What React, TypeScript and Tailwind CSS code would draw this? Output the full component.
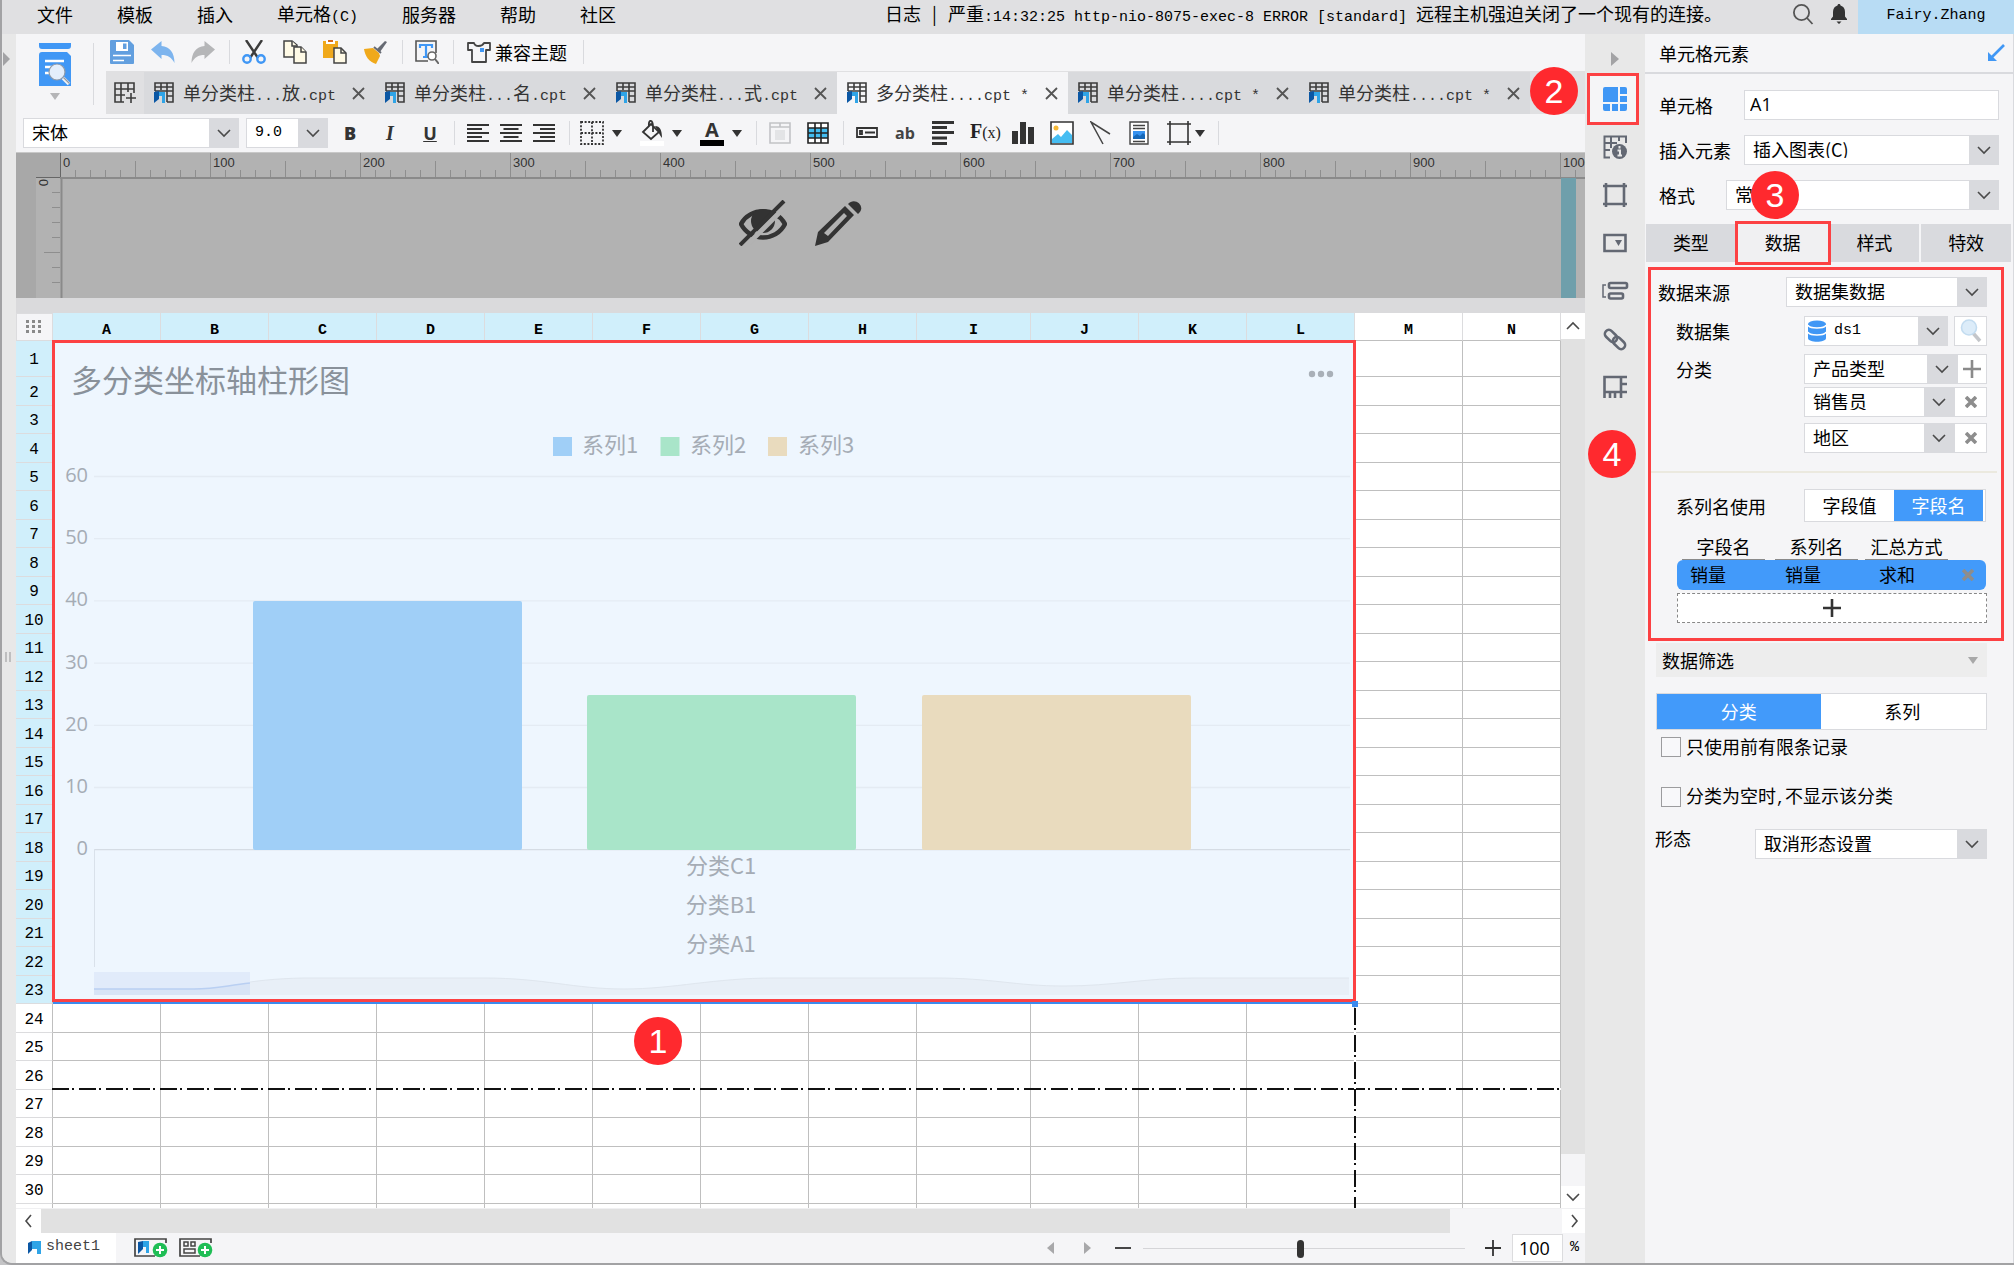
import { useState, type ReactNode } from 'react'

const UI = "font-['Noto_Sans_CJK_SC',sans-serif]"
const MONO = "font-['Liberation_Mono','Noto_Sans_CJK_SC',monospace] text-[15px]"

const MENUS = ['文件', '模板', '插入', '单元格', '服务器', '帮助', '社区']

const TABS = [
  { name: '单分类柱', dots: '...', tail: '放', ext: '.cpt' },
  { name: '单分类柱', dots: '...', tail: '名', ext: '.cpt' },
  { name: '单分类柱', dots: '...', tail: '式', ext: '.cpt' },
  { name: '多分类柱', dots: '....', tail: '', ext: 'cpt *' },
  { name: '单分类柱', dots: '....', tail: '', ext: 'cpt *' },
  { name: '单分类柱', dots: '....', tail: '', ext: 'cpt *' },
]

const COLUMNS = ['A', 'B', 'C', 'D', 'E', 'F', 'G', 'H', 'I', 'J', 'K', 'L', 'M', 'N']
const ROWS = Array.from({ length: 30 }, (_, i) => i + 1)

function Down({ color = '#333' }: { color?: string }) {
  return (
    <svg width="10" height="7" viewBox="0 0 10 7">
      <path d="M0 0h10L5 7z" fill={color} />
    </svg>
  )
}

function Chevron({ dir = 'down' }: { dir?: 'down' | 'up' | 'left' | 'right' }) {
  const d = {
    down: 'M2 5l6 6 6-6',
    up: 'M2 11l6-6 6 6',
    left: 'M10 2L5 8l5 6',
    right: 'M6 2l5 6-5 6',
  }[dir]
  return (
    <svg width="16" height="16" viewBox="0 0 16 16" fill="none" stroke="#4a4a4a" strokeWidth="1.6">
      <path d={d} />
    </svg>
  )
}

function Badge({ n, className }: { n: number; className: string }) {
  return (
    <span
      className={`absolute z-10 flex h-12 w-12 items-center justify-center rounded-full bg-[#ff292e] font-['Liberation_Sans',sans-serif] text-[34px] leading-none text-white ${className}`}
    >
      {n}
    </span>
  )
}

function Select({ label, options, className = '', text = 'text-lg', lead, id }: {
  label: string
  options: string[]
  className?: string
  text?: string
  lead?: ReactNode
  id?: string
}) {
  return (
    <div className={`relative flex h-[30px] items-center border border-[#d9dade] bg-white ${className}`}>
      {lead}
      <select
        id={id}
        aria-label={id ? undefined : label}
        className={`h-full w-full min-w-0 appearance-none bg-transparent pb-[2px] pl-2 leading-none text-black outline-none ${text}`}
      >
        {options.map((o) => (
          <option key={o}>{o}</option>
        ))}
      </select>
      <span className="pointer-events-none absolute inset-y-0 right-0 flex w-[29px] items-center justify-center bg-[#d9dade]">
        <Chevron />
      </span>
    </div>
  )
}

function Tool({ label, children, className = 'w-6' }: { label: string; children: ReactNode; className?: string }) {
  return (
    <button type="button" aria-label={label} className={`flex h-6 shrink-0 items-center justify-center ${className}`}>
      {children}
    </button>
  )
}

function Sep({ className = 'mx-3' }: { className?: string }) {
  return <span className={`h-6 w-px shrink-0 bg-[#d9dade] ${className}`} />
}

function ReportIcon() {
  return (
    <svg width="20" height="22" viewBox="0 0 20 22" className="shrink-0">
      <path d="M1 9V1h18v19h-6M1 5h18M7 1v7M13 1v19M1 9h18M13 14h6" fill="none" stroke="#3c3c3c" strokeWidth="1.6" />
      <path d="M0 10l5-1v8l-5 4z" fill="#0b57a4" />
      <path d="M5 10h6v11H8v-7H5z" fill="#2fa4e7" />
    </svg>
  )
}

function AlignIcon({ kind }: { kind: 'left' | 'center' | 'right' }) {
  return (
    <svg width="22" height="20" viewBox="0 0 22 20" fill="#333">
      {[0, 1, 2, 3, 4].map((i) => {
        const w = i % 2 ? 15 : 22
        const x = kind === 'left' ? 0 : kind === 'right' ? 22 - w : (22 - w) / 2
        return <rect key={i} x={x} y={1 + i * 4} width={w} height="2" />
      })}
    </svg>
  )
}

function MenuBar() {
  return (
    <header className="flex h-[34px] items-center bg-[#e0e0e2] pb-[6px] text-lg leading-none">
      <nav className="flex shrink-0 gap-11 pl-[35px]">
        {MENUS.map((m) => (
          <button type="button" key={m} className="whitespace-nowrap">
            {m}
            {m === '单元格' && <span className={MONO}>(C)</span>}
          </button>
        ))}
      </nav>
      <p className="ml-auto whitespace-nowrap pr-[70px]">
        日志 <span className="px-[7px]">|</span> 严重
        <span className={`${MONO} whitespace-pre`}>:14:32:25 http-nio-8075-exec-8 ERROR [standard] </span>
        远程主机强迫关闭了一个现有的连接。
      </p>
      <button type="button" aria-label="搜索">
        <svg width="22" height="22" viewBox="0 0 22 22" fill="none" stroke="#555" strokeWidth="1.8">
          <circle cx="9.5" cy="9.5" r="7.6" />
          <path d="M15 15l5.500 6" />
        </svg>
      </button>
      <button type="button" aria-label="通知" className="ml-4 mr-[10px]">
        <svg width="18" height="20" viewBox="0 0 18 20" fill="#333">
          <path d="M9 0c1 0 1.500.7 1.500 1.600C13.500 2.400 15 4.800 15 8v4.500l2 2.500v1H1v-1l2-2.500V8c0-3.200 1.500-5.600 4.500-6.400C7.500.7 8 0 9 0zM6.500 17.500h5L9 20z" />
        </svg>
      </button>
      <button type="button" className={`-mb-[6px] h-[34px] w-[156px] shrink-0 bg-[#b8dcf4] pb-1 ${MONO}`}>
        Fairy.Zhang
      </button>
    </header>
  )
}

function MainToolbar() {
  return (
    <div className="flex h-[37px] items-center pb-[2px] pl-4">
      <Tool label="保存">
        <svg width="24" height="24" viewBox="0 0 24 24">
          <path d="M1 0h18l5 5v18a1 1 0 01-1 1H1a1 1 0 01-1-1V1a1 1 0 011-1z" fill="#629fdf" />
          <path d="M6 2h12v9H6z" fill="#fff" />
          <path d="M13 3.500h3.500V9H13z" fill="#629fdf" />
          <path d="M3 15.500h18M3 20.500h11" stroke="#fff" strokeWidth="1.500" />
        </svg>
      </Tool>
      <Tool label="撤销" className="ml-[17px] w-6">
        <svg width="24" height="24" viewBox="0 0 24 24">
          <path d="M0 9.500L10.500 1v5C19 6.500 23.500 13 23.500 23c-3-5.500-6.500-8-13-8v4z" fill="#7db4ee" />
        </svg>
      </Tool>
      <Tool label="重做" className="ml-4 w-6">
        <svg width="24" height="24" viewBox="0 0 24 24">
          <path d="M24 9.500L13.500 1v5C5 6.500.5 13 .5 23c3-5.500 6.500-8 13-8v4z" fill="#b5b6b8" />
        </svg>
      </Tool>
      <Sep className="ml-[14px] mr-3" />
      <Tool label="剪切">
        <svg width="24" height="24" viewBox="0 0 24 24">
          <path d="M4 0l12 18M20 0L8 18" stroke="#3c3c3c" strokeWidth="2.400" />
          <circle cx="5" cy="19" r="3.700" fill="none" stroke="#4097f5" strokeWidth="2.400" />
          <circle cx="19" cy="19" r="3.700" fill="none" stroke="#4097f5" strokeWidth="2.400" />
        </svg>
      </Tool>
      <Tool label="复制" className="ml-[17px] w-6">
        <svg width="24" height="24" viewBox="0 0 24 24" fill="#fffae6" stroke="#444" strokeWidth="1.500">
          <path d="M1 1h8l5 4v12H1z" />
          <path d="M9 1v5h5" />
          <path d="M11 7h7l5 5v11H11z" />
          <path d="M18 7v5h5" />
        </svg>
      </Tool>
      <Tool label="粘贴" className="ml-4 w-6">
        <svg width="24" height="24" viewBox="0 0 24 24">
          <path d="M0 1h15v17H0z" fill="#f0a91b" />
          <path d="M3 0h9v4H3z" fill="#fff" />
          <path d="M5 0h5v2H5z" fill="#d96b1c" />
          <path d="M11 8h7l5 5v10H11z" fill="#fffae6" stroke="#444" strokeWidth="1.500" />
          <path d="M18 8v5h5" fill="none" stroke="#444" strokeWidth="1.500" />
        </svg>
      </Tool>
      <Tool label="格式刷" className="ml-[17px] w-6">
        <svg width="24" height="24" viewBox="0 0 24 24">
          <path d="M13 9l8-8 2 1-7 10z" fill="#666a73" />
          <path d="M0 9l9-1 6 5 1 3-4 8C5 22 1 16 0 9z" fill="#f0a91b" />
          <path d="M10 7l7 6" stroke="#666a73" strokeWidth="2" />
        </svg>
      </Tool>
      <Sep className="ml-[14px] mr-3" />
      <Tool label="预览">
        <svg width="24" height="24" viewBox="0 0 24 24" fill="none">
          <path d="M21 13V1H1v20h12" stroke="#555" strokeWidth="1.600" />
          <path d="M5 8V5h12v3M11 5v12M8 17h5" stroke="#4097f5" strokeWidth="2.200" />
          <circle cx="17" cy="16" r="4" fill="#fff" stroke="#666" strokeWidth="1.600" />
          <path d="M20 19l4 5" stroke="#666" strokeWidth="2" />
        </svg>
      </Tool>
      <Sep className="ml-[14px] mr-[13px]" />
      <button type="button" className="flex items-center gap-1 text-lg leading-none whitespace-nowrap">
        <svg width="24" height="24" viewBox="0 0 24 24">
          <path d="M1 3h6c1 4 8 4 10 0h6v7h-4v12H5V10H1z" fill="none" stroke="#444" strokeWidth="1.800" strokeLinejoin="round" />
          <path d="M13 8h4v4h-4z" fill="#4097f5" />
        </svg>
        兼容主题
      </button>
      <Sep className="mx-4" />
    </div>
  )
}

function FileTabs() {
  const [active, setActive] = useState(3)
  return (
    <div className="ml-3 flex h-[43px] overflow-hidden border-t border-[#e0e0e2] bg-[#e0e0e2]">
      <button type="button" aria-label="新建模板" className="flex w-[38px] shrink-0 items-center justify-center">
        <svg width="22" height="22" viewBox="0 0 22 22" fill="none" stroke="#3c3c3c" strokeWidth="1.600">
          <path d="M20 11V1H1v19h9M1 7h19M1 13h10M7 1v19M14 1v9M12 16h10M17 11v10" />
        </svg>
      </button>
      {TABS.map((t, i) => (
        <div
          key={i}
          className={
            i === active
              ? 'flex w-[231px] shrink-0 items-center bg-[#f5f5f7] pl-[10px]'
              : 'flex w-[231px] shrink-0 items-center bg-[#d9dadd] pl-[10px]'
          }
        >
          <button
            type="button"
            onClick={() => setActive(i)}
            className="flex items-center gap-[9px] text-lg leading-none whitespace-nowrap text-[#333]"
          >
            <ReportIcon />
            <span>
              {t.name}
              <span className={MONO}>{t.dots}</span>
              {t.tail}
              <span className={MONO}>{t.ext}</span>
            </span>
          </button>
          <button type="button" aria-label="关闭" className="ml-4">
            <svg width="13" height="13" viewBox="0 0 13 13" stroke="#555" strokeWidth="1.800">
              <path d="M1 1l11 11M12 1L1 12" />
            </svg>
          </button>
        </div>
      ))}
    </div>
  )
}

function FormatBar() {
  return (
    <div className="flex h-[38px] items-center bg-[#f5f5f7] pl-[7px]">
      <Select label="字体" options={['宋体']} className="w-[216px] shrink-0" />
      <Select label="字号" options={['9.0']} className="ml-[7px] w-[82px] shrink-0" text={`${MONO} pl-1`} />
      <button type="button" className="ml-[14px] w-4 font-['Open_Sans',sans-serif] text-lg leading-none font-extrabold text-[#333]">B</button>
      <button type="button" className="ml-6 w-4 font-['Liberation_Serif',serif] text-xl leading-none font-bold text-[#333] italic">I</button>
      <button type="button" className="ml-6 w-4 font-['Open_Sans',sans-serif] text-lg leading-none font-bold text-[#333] underline">U</button>
      <Sep className="ml-4 mr-3" />
      <div className="flex gap-[11px]">
        <Tool label="左对齐" className="w-[22px]"><AlignIcon kind="left" /></Tool>
        <Tool label="居中" className="w-[22px]"><AlignIcon kind="center" /></Tool>
        <Tool label="右对齐" className="w-[22px]"><AlignIcon kind="right" /></Tool>
      </div>
      <Sep className="ml-[14px] mr-[9px]" />
      <Tool label="边框" className="w-11 gap-2">
        <svg width="24" height="24" viewBox="0 0 24 24" fill="none" stroke="#333" strokeWidth="1.800" strokeDasharray="2 1.600">
          <path d="M1 1h22v22H1zM1 12h22M12 1v22" />
        </svg>
        <Down />
      </Tool>
      <Tool label="填充" className="ml-4 w-11 gap-2">
        <svg width="24" height="26" viewBox="0 0 24 26">
          <path d="M3 12l8-8 8 8-8 7zM9 6c-1-7 4-7 4 1v5" fill="none" stroke="#333" strokeWidth="1.800" />
          <path d="M15 6c5 0 7 4 7 12-2-2-3-5-4-7z" fill="#333" />
          <path d="M0 21h24v5H0z" fill="#fff" />
        </svg>
        <Down />
      </Tool>
      <Tool label="字体颜色" className="ml-4 w-11 gap-2">
        <span className="flex w-6 flex-col items-center border-b-[6px] border-black font-['Open_Sans',sans-serif] text-xl leading-5 font-bold text-[#333]">A</span>
        <Down />
      </Tool>
      <Sep className="ml-[13px] mr-3" />
      <Tool label="合并单元格" className="w-[22px]">
        <svg width="22" height="22" viewBox="0 0 22 22" fill="none" stroke="#c2c3c6" strokeWidth="1.600">
          <path d="M1 1h20v20H1zM1 5h20M11 1v4" />
          <path d="M6 8h10v10H6z" fill="#e3e4e6" stroke="none" />
        </svg>
      </Tool>
      <Tool label="表格" className="ml-4 w-[22px]">
        <svg width="22" height="22" viewBox="0 0 22 22">
          <path d="M1 1h20v20H1z" fill="#fff" />
          <path d="M1 6h20v10H1z" fill="#43bdf0" />
          <path d="M1 1h20v20H1zM1 6h20M1 11h20M1 16h20M8 1v20M14 1v20" fill="none" stroke="#222" strokeWidth="1.600" />
        </svg>
      </Tool>
      <Sep className="ml-[14px] mr-3" />
      <div className="flex items-center gap-4">
        <Tool label="控件" className="w-[22px]">
          <svg width="22" height="12" viewBox="0 0 22 12" fill="none" stroke="#333" strokeWidth="1.800">
            <path d="M1 1h20v9H1zM4 4h2v3H4zM9 5.500h10" />
          </svg>
        </Tool>
        <button type="button" className="w-[22px] font-['Open_Sans',sans-serif] text-base leading-none font-bold text-[#444]">ab</button>
        <Tool label="富文本" className="w-[22px]">
          <svg width="22" height="24" viewBox="0 0 22 24" fill="#333">
            <path d="M0 0h22v3H0zM0 5h15v3H0zM0 10h22v3H0zM0 15.500h15v3H0zM0 21h15v3H0z" />
          </svg>
        </Tool>
        <button type="button" className="w-[26px] whitespace-nowrap font-['Liberation_Serif',serif] text-xl leading-none text-[#222]">
          <b>F</b><span className="text-base">(x)</span>
        </button>
        <Tool label="图表" className="w-[22px]">
          <svg width="22" height="22" viewBox="0 0 22 22" fill="#333">
            <path d="M0 9h6v13H0zM8 0h6v22H8zM16 5h6v17h-6z" />
          </svg>
        </Tool>
        <Tool label="图片">
          <svg width="24" height="24" viewBox="0 0 24 24">
            <path d="M1 1h22v22H1z" fill="#fff" stroke="#333" strokeWidth="1.600" />
            <circle cx="6" cy="7" r="2.500" fill="#f5b836" />
            <path d="M2 18l6-5 3 3 6-7 5 5v8H2z" fill="#45bdf2" />
          </svg>
        </Tool>
        <Tool label="斜线" className="w-[22px]">
          <svg width="22" height="24" viewBox="0 0 22 24" fill="none" stroke="#444" strokeWidth="1.500">
            <path d="M20 13L1 1l12 22" />
          </svg>
        </Tool>
        <Tool label="子报表" className="w-[22px]">
          <svg width="20" height="24" viewBox="0 0 20 24">
            <path d="M1 1h18v22H1z" fill="#fff" stroke="#444" strokeWidth="1.400" />
            <path d="M4 4.500h12M4 7.500h12M4 20.500h12" stroke="#444" strokeWidth="1.400" />
            <path d="M4 10h12v8H4z" fill="#3792ef" />
            <path d="M4 16l4-3 3 2 3-3 2 2v4H4z" fill="#1668b8" />
          </svg>
        </Tool>
        <Tool label="形状" className="w-10 gap-1">
          <svg width="24" height="24" viewBox="0 0 24 24" fill="none" stroke="#333" strokeWidth="1.600">
            <path d="M3 0v24M21 0v24M0 3h24M0 21h24" />
          </svg>
          <Down />
        </Tool>
      </div>
      <Sep className="mx-3" />
    </div>
  )
}

// Page header region: rulers around an empty grey page
function PageHeader() {
  const ticks = Array.from({ length: 102 }, (_, i) => i)
  return (
    <section className="relative h-[146px] overflow-hidden bg-[#b2b2b2]">
      <svg width="100%" height="146" className="block">
        <rect width="20" height="146" fill="#a8a8a8" />
        <rect width="44" height="25" fill="#a8a8a8" />
        <path d="M0 0.500h2400" stroke="#c8c8c8" />
        {ticks.map((i) => {
          const x = 44 + i * 15
          const top = i % 10 === 0 ? 1 : i % 5 === 0 ? 9 : 18
          return <path key={i} d={`M${x + 0.5} ${top}V25`} stroke={i === 0 ? '#666' : '#8e8e8e'} />
        })}
        {Array.from({ length: 11 }, (_, i) => (
          <text key={i} x={47 + i * 150} y="15" fontSize="13" fill="#333" fontFamily="Liberation Sans, sans-serif">
            {i * 100}
          </text>
        ))}
        <path d="M44 26h2400M45.500 25v121" stroke="#8a8a8a" strokeWidth="2" />
        <path d="M20 25.500h24" stroke="#666" />
        {[1, 2, 3, 4, 5, 6, 7].map((i) => (
          <path key={i} d={`M${i === 5 ? 28 : 36} ${25.5 + i * 15}H44`} stroke="#8e8e8e" />
        ))}
        <text transform="translate(28 27) rotate(90)" x="0" y="5" fontSize="13" fill="#333" fontFamily="Liberation Sans, sans-serif">
          0
        </text>
        <rect x="1545" y="26" width="15" height="120" fill="#6f9fab" />
      </svg>
      <div className="absolute inset-x-0 top-12 flex justify-center gap-7">
        <button type="button" aria-label="隐藏">
          <svg width="48" height="46" viewBox="0 0 48 46">
            <path d="M2 24C11 7 37 7 46 24 37 42 11 42 2 24z" fill="none" stroke="#333" strokeWidth="4.500" />
            <circle cx="24" cy="21" r="12" fill="#333" />
            <path d="M6 47L49 4" stroke="#b2b2b2" strokeWidth="5" />
            <path d="M1 45L45 1" stroke="#333" strokeWidth="4" />
          </svg>
        </button>
        <button type="button" aria-label="编辑">
          <svg width="48" height="46" viewBox="0 0 48 46" fill="#333">
            <path d="M0 46l3-14L30 6l9 9-26 27zM9 33l4 3 19-20-3-3z" fillRule="evenodd" />
            <path d="M33 4c7-8 19 3 10 10z" />
          </svg>
        </button>
      </div>
    </section>
  )
}

function Chart() {
  const bars = [
    { x: 253, y: 601, fill: '#a0cff7' },
    { x: 587, y: 695, fill: '#a9e5c9' },
    { x: 922, y: 695, fill: '#e9dbbe' },
  ]
  const family = 'Noto Sans CJK SC, sans-serif'
  return (
    <svg viewBox="54 342 1300 660" className="block h-full w-full bg-[#eef6fe]" fontFamily={family} role="img">
      <text x="71" y="392" fontSize="31" fill="#89919a">多分类坐标轴柱形图</text>
      {[1312, 1321, 1330].map((x) => (
        <circle key={x} cx={x} cy="374" r="3.200" fill="#a9b0b8" />
      ))}
      {['系列1', '系列2', '系列3'].map((s, i) => (
        <g key={s}>
          <rect x={553 + i * 107.5} y="437" width="19" height="19" fill={bars[i].fill} />
          <text x={582 + i * 108} y="453" fontSize="22" fill="#a5acb5">{s}</text>
        </g>
      ))}
      {[60, 50, 40, 30, 20, 10, 0].map((v, i) => (
        <g key={v}>
          <path d={`M94 ${476.5 + i * 62.2}H1350`} stroke={v ? '#e4ebf3' : '#d5dce4'} strokeWidth="1.300" />
          <text x="88" y={482 + i * 62.2} fontSize="20" fill="#a5acb5" textAnchor="end" fontFamily="Open Sans, sans-serif">{v}</text>
        </g>
      ))}
      {bars.map((b) => (
        <rect key={b.x} x={b.x} y={b.y} width="269" height={850 - b.y} rx="2" fill={b.fill} />
      ))}
      <path d="M94.500 849v118" stroke="#d9e1ea" fill="none" />
      {['分类C1', '分类B1', '分类A1'].map((s, i) => (
        <text key={s} x="721" y={874 + i * 39} fontSize="22" fill="#a5acb5" textAnchor="middle">{s}</text>
      ))}
      <path
        d="M94 989h100c30 0 50-10 110-11h180c60 0 90 11 140 11s90-11 150-11h160c60 0 80 8 130 8s80-8 130-8h155v17H94z"
        fill="#e8eff7"
      />
      <path d="M194 989c30 0 50-10 110-11h180c60 0 90 11 140 11s90-11 150-11h160c60 0 80 8 130 8s80-8 130-8h155" fill="none" stroke="#dfe6ee" />
      <rect x="94" y="972" width="156" height="23" fill="#e1ebfa" />
      <path d="M94 989h100c22 0 30-3 56-6v12H94z" fill="#d8e4f6" />
      <path d="M94 989h100c22 0 30-3 56-6" fill="none" stroke="#b9cff2" strokeWidth="1.500" />
    </svg>
  )
}

function Sheet() {
  const cell = 'border-r border-b border-[#bfbfbf] p-0'
  return (
    <section className="flex bg-white">
      <div className="relative min-w-0 flex-1 overflow-hidden">
        <table className="w-full table-fixed border-separate border-spacing-0 font-['Liberation_Mono',monospace] text-base leading-none">
          <colgroup>
            <col className="w-[37px]" />
            {COLUMNS.map((c) => (
              <col key={c} className={c === 'I' ? 'w-[114px]' : c === 'N' ? '' : 'w-[108px]'} />
            ))}
          </colgroup>
          <thead>
            <tr className="h-7">
              <td className="border border-[#dcdcde] bg-[#f5f5f7] p-0">
                <svg width="18" height="14" viewBox="0 0 18 14" className="mx-auto" fill="#8a8a8a">
                  {[0, 6, 12].map((x) => [0, 5, 10].map((y) => <rect key={`${x}-${y}`} x={x} y={y} width="3" height="3" />))}
                </svg>
              </td>
              {COLUMNS.map((c, i) => (
                <th
                  key={c}
                  className={`border-r border-b border-b-[#bfbfbf] border-r-[#dcdcde] p-0 pt-2 text-[15px] font-bold ${i < 12 ? 'bg-[#d0effb]' : 'bg-white'}`}
                >
                  {c}
                </th>
              ))}
            </tr>
          </thead>
          <tbody>
            {ROWS.map((r) => (
              <tr key={r} className={r === 1 ? 'h-9' : 'h-7 even:h-[29px]'}>
                <th
                  className={`border-r border-b border-b-[#dcdcde] border-r-[#bfbfbf] p-0 pt-[3px] font-normal ${r < 24 ? 'bg-[#d0effb]' : 'bg-white'}`}
                >
                  {r}
                </th>
                {r === 1 && (
                  <td colSpan={12} rowSpan={23} className="relative p-0">
                    <div className="absolute inset-0 border border-b-2 border-[#3c8bee]">
                      <Chart />
                    </div>
                    <span className="absolute -inset-px bottom-[2px] border-[3px] border-[#fc4143]" />
                    <span className="absolute -right-[3px] -bottom-[3px] h-[6px] w-[6px] bg-[#3c8bee]" />
                  </td>
                )}
                {COLUMNS.slice(r < 24 ? 12 : 0).map((c) => (
                  <td key={c} className={cell} />
                ))}
              </tr>
            ))}
            <tr className="h-1">
              <th className="border-r border-[#bfbfbf] p-0" />
              {COLUMNS.map((c) => (
                <td key={c} className="border-r border-[#bfbfbf] p-0" />
              ))}
            </tr>
          </tbody>
        </table>
        {/* page break guides */}
        <span className="absolute right-0 bottom-[118px] left-9 h-[2px] bg-[repeating-linear-gradient(90deg,#111_0_17px,#fff_17px_20px,#111_20px_22px,#fff_22px_27px)]" />
        <span className="absolute bottom-0 left-[1338px] h-[200px] w-[2px] bg-[repeating-linear-gradient(180deg,#111_0_17px,#fff_17px_20px,#111_20px_22px,#fff_22px_27px)]" />
        <Badge n={1} className="bottom-[143px] left-[618px]" />
      </div>
      <div className="flex w-6 shrink-0 flex-col bg-[#f5f5f7]">
        <button type="button" aria-label="向上滚动" className="flex h-[26px] items-center justify-center bg-white"><Chevron dir="up" /></button>
        <div className="flex-1 bg-[#e1e1e1]" />
        <div className="h-8" />
        <button type="button" aria-label="向下滚动" className="flex h-[22px] items-center justify-center bg-white"><Chevron /></button>
      </div>
    </section>
  )
}

function AddSheetIcon({ report }: { report?: boolean }) {
  return (
    <svg width="34" height="20" viewBox="0 0 34 20">
      <path d="M32 5V1H1v17h20" fill="none" stroke="#444" strokeWidth="1.700" />
      {report ? (
        <>
          <path d="M4 4l5-1v8l-5 5z" fill="#0b57a4" />
          <path d="M9 3h6v12h-3V9H9z" fill="#2fa4e7" />
        </>
      ) : (
        <path d="M5 4h4v4H5zM12 4h4v4h-4zM5 11h11v4H5z" fill="none" stroke="#444" strokeWidth="1.500" />
      )}
      <circle cx="26" cy="12" r="7.300" fill="#1fbe55" />
      <path d="M22 12h8M26 8v8" stroke="#fff" strokeWidth="2" />
    </svg>
  )
}

function BottomBar() {
  return (
    <footer className="bg-[#f5f5f7]">
      <div className="flex h-[25px] border-t border-[#f0f0f2]">
        <button type="button" aria-label="向左滚动" className="flex w-[25px] items-center justify-center bg-white"><Chevron dir="left" /></button>
        <div className="flex-1 bg-[#e1e1e1]" />
        <div className="w-28" />
        <button type="button" aria-label="向右滚动" className="flex w-[23px] items-center justify-center bg-white"><Chevron dir="right" /></button>
      </div>
      <div className="flex h-[30px] items-center">
        <button type="button" className={`flex h-full w-[100px] items-center gap-[5px] bg-white pb-[2px] pl-3 text-[#444] ${MONO}`}>
          <svg width="13" height="13" viewBox="0 0 13 13">
            <path d="M0 2l4-2v9l-4 4z" fill="#0b57a4" />
            <path d="M4 0h9v13H9V8H4z" fill="#2fa4e7" />
          </svg>
          sheet1
        </button>
        <button type="button" aria-label="新增报表" className="ml-[18px]"><AddSheetIcon report /></button>
        <button type="button" aria-label="新增聚合" className="ml-[11px]"><AddSheetIcon /></button>
        <button type="button" aria-label="上一页" className="ml-auto">
          <svg width="7" height="12" viewBox="0 0 7 12" fill="#a8a8aa"><path d="M7 0v12L0 6z" /></svg>
        </button>
        <button type="button" aria-label="下一页" className="ml-[30px]">
          <svg width="7" height="12" viewBox="0 0 7 12" fill="#a8a8aa"><path d="M0 0v12l7-6z" /></svg>
        </button>
        <button type="button" aria-label="缩小" className="ml-6">
          <svg width="16" height="16" viewBox="0 0 16 16" stroke="#333" strokeWidth="1.800"><path d="M0 8h16" /></svg>
        </button>
        <input
          type="range"
          aria-label="缩放"
          min={10}
          max={190}
          defaultValue={98}
          className="mx-3 h-5 w-[322px] appearance-none bg-transparent [&::-webkit-slider-runnable-track]:h-px [&::-webkit-slider-runnable-track]:bg-[#d5d5d8] [&::-webkit-slider-thumb]:-mt-2 [&::-webkit-slider-thumb]:h-[18px] [&::-webkit-slider-thumb]:w-[7px] [&::-webkit-slider-thumb]:appearance-none [&::-webkit-slider-thumb]:rounded-sm [&::-webkit-slider-thumb]:bg-[#333]"
        />
        <button type="button" aria-label="放大" className="ml-2">
          <svg width="16" height="16" viewBox="0 0 16 16" stroke="#333" strokeWidth="1.800"><path d="M0 8h16M8 0v16" /></svg>
        </button>
        <input
          aria-label="缩放比例"
          defaultValue="100"
          className="ml-[11px] h-7 w-[51px] border border-[#dcdcde] bg-white pl-[6px] font-['Open_Sans',sans-serif] text-lg leading-none"
        />
        <span className={`w-[22px] pl-[7px] ${MONO}`}>%</span>
      </div>
    </footer>
  )
}

const SIDE_ICONS: { label: string; icon: ReactNode }[] = [
  {
    label: '单元格属性',
    icon: (
      <>
        <path d="M23 8V1.500H1.500v21H7M1 8h13M8 1v12M16 1v5M1 15h6" strokeWidth="2" />
        <circle cx="16.500" cy="16.500" r="7.500" fill="#636873" stroke="none" />
        <path d="M16.500 11v2.500M14.500 15.500h2.500v5M14.500 20.500h4.500" stroke="#e8e8e8" strokeWidth="2" />
      </>
    ),
  },
  { label: '悬浮元素', icon: <path d="M3 0v24M21 0v24M0 3h24M0 21h24" /> },
  {
    label: '控件设置',
    icon: (
      <>
        <path d="M1.500 4h21v16h-21z" />
        <path d="M12 9h7l-3.500 6z" fill="#636873" stroke="none" />
      </>
    ),
  },
  {
    label: '条件属性',
    icon: (
      <>
        <path d="M3 6H0v12h3" strokeWidth="1.500" />
        <rect x="6" y="4" width="18" height="5" rx="1.500" />
        <rect x="6" y="14.500" width="14" height="5" rx="1.500" />
      </>
    ),
  },
  {
    label: '超级链接',
    icon: (
      <>
        <rect x="1" y="5" width="14" height="8" rx="4" transform="rotate(45 8 9)" />
        <rect x="9" y="12" width="14" height="8" rx="4" transform="rotate(45 16 16)" />
      </>
    ),
  },
  { label: '组件设置', icon: <path d="M1.500 23V2H24M1.500 17H24M18 2v21M18 9h6M7 17v6M12 17v6" /> },
]

function SideStrip() {
  return (
    <aside className="relative flex w-[60px] shrink-0 flex-col items-center bg-[#e8e8e8]">
      <button type="button" aria-label="收起" className="flex h-[41px] items-center pt-2">
        <svg width="8" height="14" viewBox="0 0 8 14" fill="#a3a3a5"><path d="M0 0v14l8-7z" /></svg>
      </button>
      <div className="flex h-12 items-center pr-1">
        <button type="button" aria-label="单元格元素" className="flex h-[46px] w-[46px] items-center justify-center bg-[#f5f5f7] pl-1 outline-[3px] outline-[#fc4143]">
          <svg width="24" height="24" viewBox="0 0 24 24" fill="#4097f5">
            <path d="M2 0h13v15H0V2a2 2 0 012-2zM17 0h5a2 2 0 012 2v5h-7zM17 9h7v6h-7zM0 17h7v7H2a2 2 0 01-2-2zM9 17h6v7H9zM17 17h7v5a2 2 0 01-2 2h-5z" />
          </svg>
        </button>
      </div>
      {SIDE_ICONS.map((s) => (
        <button type="button" key={s.label} aria-label={s.label} className="flex h-12 items-center">
          <svg width="24" height="24" viewBox="0 0 24 24" fill="none" stroke="#636873" strokeWidth="2.600" overflow="visible">{s.icon}</svg>
        </button>
      ))}
      <Badge n={2} className="top-[33px] -left-[55px]" />
      <Badge n={4} className="top-[396px] left-[3px]" />
    </aside>
  )
}

function SmallButton({ label, className, children }: { label: string; className: string; children: ReactNode }) {
  return (
    <button type="button" aria-label={label} className={`flex h-[30px] items-center justify-center border border-[#d9dade] bg-white ${className}`}>
      {children}
    </button>
  )
}

function Cross() {
  return (
    <svg width="12" height="12" viewBox="0 0 12 12" stroke="#8d8d8d" strokeWidth="3.600">
      <path d="M1 1l10 10M11 1L1 11" />
    </svg>
  )
}

function DataSettings() {
  return (
    <section className="mt-[5px] mr-[9px] ml-[3px] border-[3px] border-[#fc4143] pt-[7px] pb-[15px]">
      <div className="flex items-center justify-between pr-[14px] pl-[7px]">
        <label htmlFor="source">数据来源</label>
        <Select id="source" label="数据来源" options={['数据集数据']} className="w-[201px]" />
      </div>
      <div className="mt-[9px] flex items-center pr-[14px] pl-[25px]">
        <label htmlFor="dataset" className="mr-auto">数据集</label>
        <Select
          id="dataset"
          label="数据集"
          options={['ds1']}
          className="w-[144px]"
          text={MONO}
          lead={
            <svg width="18" height="22" viewBox="0 0 18 22" className="ml-[3px] shrink-0">
              <path d="M0 4v14c0 5 18 5 18 0V4z" fill="#4097f5" />
              <ellipse cx="9" cy="4" rx="9" ry="3.500" fill="#4097f5" />
              <path d="M0 5c1 4 17 4 18 0M0 12c1 4 17 4 18 0" fill="none" stroke="#fff" strokeWidth="1.400" />
            </svg>
          }
        />
        <SmallButton label="预览数据集" className="ml-[6px] w-[33px]">
          <svg width="22" height="24" viewBox="0 0 22 24">
            <path d="M13 14l7 8" stroke="#c4c6ca" strokeWidth="3.500" />
            <circle cx="9" cy="8.500" r="7.500" fill="#dcecf9" stroke="#c3dcf0" strokeWidth="1.600" />
          </svg>
        </SmallButton>
      </div>
      <div className="mt-2 flex items-center pr-[14px] pl-[25px]">
        <label htmlFor="category" className="mr-auto">分类</label>
        <Select id="category" label="分类" options={['产品类型']} className="w-[153px]" />
        <SmallButton label="添加分类" className="w-[30px]">
          <svg width="18" height="18" viewBox="0 0 18 18" stroke="#8a8a8a" strokeWidth="2.600"><path d="M0 9h18M9 0v18" /></svg>
        </SmallButton>
      </div>
      <div className="mt-[3px] flex justify-end pr-[14px]">
        <Select label="分类二" options={['销售员']} className="w-[150px]" />
        <SmallButton label="删除" className="w-[33px]"><Cross /></SmallButton>
      </div>
      <div className="mt-[6px] flex justify-end pr-[14px]">
        <Select label="分类三" options={['地区']} className="w-[150px]" />
        <SmallButton label="删除" className="w-[33px]"><Cross /></SmallButton>
      </div>
      <hr className="mt-[18px] mr-1 border-t-2 border-[#ebe9df]" />
      <div className="mt-4 flex items-center justify-between pr-[15px] pl-[25px]">
        <span>系列名使用</span>
        <div className="flex h-[33px] w-[182px] border border-[#d9dade] bg-white pr-[2px]">
          <button type="button" className="flex-1 pb-[2px]">字段值</button>
          <button type="button" className="flex-1 bg-[#429afa] pb-[2px] text-white">字段名</button>
        </div>
      </div>
      <div className="mt-[11px] mr-[15px] ml-[26px]">
        <table className="w-full table-fixed border-separate border-spacing-0 text-left">
          <colgroup>
            <col className="w-[93px]" />
            <col className="w-[93px]" />
            <col />
            <col className="w-9" />
          </colgroup>
          <thead>
            <tr className="h-[27px]">
              {['字段名', '系列名', '汇总方式'].map((h) => (
                <th key={h} className="p-0 pt-1 text-center font-normal">
                  <span className="mx-auto block w-[83px] border-b border-[#8a8a8a] pb-1">{h}</span>
                </th>
              ))}
              <th className="p-0" />
            </tr>
          </thead>
          <tbody>
            <tr className="h-[30px] [&>td]:bg-[#429afa]">
              <td className="rounded-l-md p-0 pb-[2px] pl-[13px]">销量</td>
              <td className="p-0 pb-[2px] pl-[15px]">销量</td>
              <td className="p-0 pb-[2px] pl-4">求和</td>
              <td className="rounded-r-md p-0">
                <button type="button" aria-label="删除" className="ml-3 block"><Cross /></button>
              </td>
            </tr>
          </tbody>
        </table>
      </div>
      <button type="button" aria-label="添加系列" className="mt-[3px] ml-[26px] flex h-[30px] w-[310px] items-center justify-center border border-dashed border-[#888] bg-white">
        <svg width="18" height="18" viewBox="0 0 18 18" stroke="#333" strokeWidth="2.600"><path d="M0 9h18M9 0v18" /></svg>
      </button>
    </section>
  )
}

function CheckRow({ id, children, className }: { id: string; children: ReactNode; className: string }) {
  return (
    <div className={`ml-4 flex h-5 items-center gap-[5px] ${className}`}>
      <input id={id} type="checkbox" className="h-5 w-5 appearance-none border border-[#9c9c9e] bg-[#f8f8fa] checked:bg-[#429afa]" />
      <label htmlFor={id} className="pb-[2px]">{children}</label>
    </div>
  )
}

function PropertyPanel() {
  const [tab, setTab] = useState('数据')
  return (
    <aside className="w-[369px] shrink-0 border-r border-[#d9dade] bg-[#f5f5f7] text-lg leading-none">
      <div className="flex h-10 items-center justify-between border-b-2 border-[#d9dade] pr-2 pl-[14px]">
        <h2>单元格元素</h2>
        <button type="button" aria-label="弹出面板">
          <svg width="18" height="18" viewBox="0 0 18 18" fill="none" stroke="#4097f5" strokeWidth="2.600">
            <path d="M17 1L4 14" />
            <path d="M1 8v9h9z" fill="#4097f5" stroke="none" />
          </svg>
        </button>
      </div>
      <div className="mt-4 mr-[14px] ml-[14px] flex items-center justify-between">
        <label htmlFor="cell">单元格</label>
        <input id="cell" defaultValue="A1" className="h-[30px] w-[255px] border border-[#d9dade] bg-white pb-[2px] pl-[5px] font-['Open_Sans',sans-serif] text-lg" />
      </div>
      <div className="mx-[14px] mt-[15px] flex items-center justify-between">
        <label htmlFor="insert">插入元素</label>
        <Select id="insert" label="插入元素" options={['插入图表(C)']} className="w-[255px]" />
      </div>
      <div className="relative mx-[14px] mt-[15px] flex items-center justify-between">
        <label htmlFor="format">格式</label>
        <Select id="format" label="格式" options={['常规']} className="w-[273px]" />
        <Badge n={3} className="-top-[9px] left-[92px]" />
      </div>
      <div className="mt-[14px] flex h-[38px] gap-[2px] pr-[2px] pl-px" role="tablist">
        {['类型', '数据', '样式', '特效'].map((t) => (
          <button
            type="button"
            role="tab"
            key={t}
            aria-selected={t === tab}
            onClick={() => setTab(t)}
            className={`flex-1 pb-[2px] ${t === tab ? 'relative bg-[#f0f0f2] outline-[3px] outline-[#fc4143]' : 'bg-[#d9dade]'}`}
          >
            {t}
          </button>
        ))}
      </div>
      <DataSettings />
      <button type="button" className="mt-[2px] ml-[11px] flex h-[34px] w-[331px] items-center justify-between bg-[#ededed] pr-[9px] pl-[6px]">
        数据筛选
        <Down color="#a8a8a8" />
      </button>
      <div className="mt-4 ml-[11px] flex h-[37px] w-[331px] border border-[#d9dade] bg-white pr-[2px]">
        <button type="button" className="flex-1 bg-[#429afa] pb-[2px] text-white">分类</button>
        <button type="button" className="flex-1 pb-[2px]">系列</button>
      </div>
      <CheckRow id="limit" className="mt-[7px]">只使用前有限条记录</CheckRow>
      <CheckRow id="empty" className="mt-[30px]">分类为空时<span className={MONO}>,</span>不显示该分类</CheckRow>
      <div className="mt-[22px] mr-[26px] ml-[10px] flex justify-between">
        <label htmlFor="state">形态</label>
        <Select id="state" label="形态" options={['取消形态设置']} className="w-[232px]" />
      </div>
    </aside>
  )
}

export default function App() {
  return (
    <div className="bg-[#c4c4c6]">
      <div className={`flex min-h-screen flex-col overflow-hidden rounded-bl-xl border-b-2 border-l-2 border-[#a2a2a4] bg-[#e8e8e8] text-black ${UI}`}>
        <MenuBar />
        <div className="flex flex-1">
          <div className="flex w-[14px] shrink-0 flex-col justify-between bg-[#e8e8e8]">
            <button type="button" aria-label="展开" className="mt-[18px] ml-px">
              <svg width="7" height="14" viewBox="0 0 7 14" fill="#a3a3a5"><path d="M0 0v14l7-7z" /></svg>
            </button>
            <svg width="6" height="10" viewBox="0 0 6 10" className="mb-[601px] ml-[3px]" stroke="#a3a3a5" strokeWidth="1.200">
              <path d="M1 0v10M5 0v10" />
            </svg>
          </div>
          <main className="flex min-w-0 flex-1 flex-col bg-[#f5f5f7]">
            <div className="flex h-20">
              <button type="button" aria-label="预览模板" className="my-[9px] flex w-[78px] shrink-0 flex-col items-center border-r border-[#d9dade]">
                <svg width="32" height="44" viewBox="0 0 32 44">
                  <path d="M0 0h32v3a3 3 0 01-3 3H3a3 3 0 01-3-3zM3 9h25l4 4v30H0V12a3 3 0 013-3z" fill="#4097f5" />
                  <path d="M6 18h19M6 24h10M6 30h8" stroke="#fff" strokeWidth="2.400" />
                  <circle cx="18" cy="29" r="8" fill="#e3eefb" stroke="#8f9aa8" strokeWidth="1.200" />
                  <path d="M24 35l6 6" stroke="#f2f2f2" strokeWidth="3.500" />
                  <path d="M24.500 34.500l6 6" stroke="#8f9aa8" strokeWidth="1.200" />
                </svg>
                <span className="mt-[6px]"><Down color="#b5b5b7" /></span>
              </button>
              <div className="min-w-0 flex-1">
                <MainToolbar />
                <FileTabs />
              </div>
            </div>
            <FormatBar />
            <PageHeader />
            <div className="h-[15px] bg-[#dadadc]" />
            <Sheet />
            <BottomBar />
          </main>
          <SideStrip />
          <PropertyPanel />
        </div>
      </div>
    </div>
  )
}
